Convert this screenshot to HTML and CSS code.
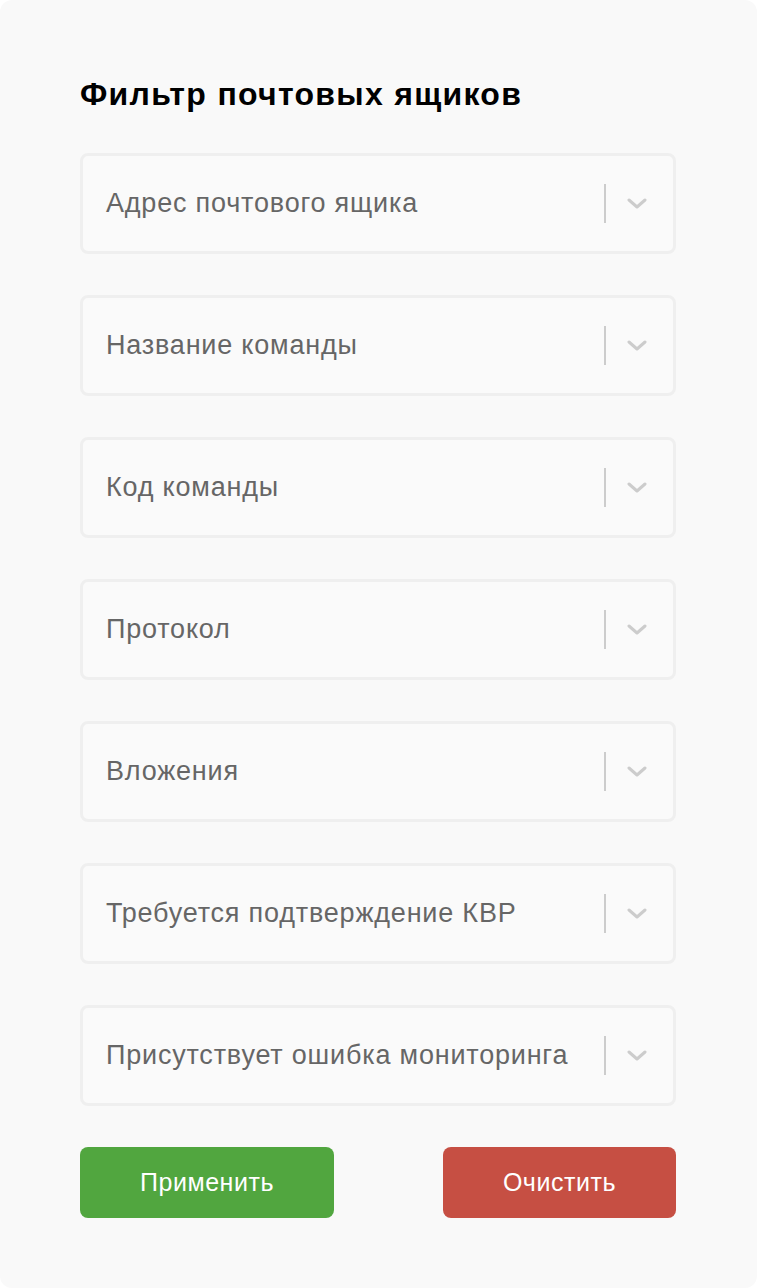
FILE: index.html
```html
<!DOCTYPE html>
<html lang="ru">
<head>
<meta charset="utf-8">
<title>Фильтр почтовых ящиков</title>
<link rel="stylesheet" href="styles.css">
</head>
<body>
<div class="panel">
  <h1 class="title">Фильтр почтовых ящиков</h1>
  <div class="fields">
    <div class="select"><span class="placeholder">Адрес почтового ящика</span><span class="indicators"><span class="sep"></span><svg class="chev" width="20" height="12" viewBox="0 0 20 12"><path d="M2 2 L10 9 L18 2" fill="none" stroke="#cccccc" stroke-width="3" stroke-linecap="round" stroke-linejoin="round"/></svg></span></div>
    <div class="select"><span class="placeholder">Название команды</span><span class="indicators"><span class="sep"></span><svg class="chev" width="20" height="12" viewBox="0 0 20 12"><path d="M2 2 L10 9 L18 2" fill="none" stroke="#cccccc" stroke-width="3" stroke-linecap="round" stroke-linejoin="round"/></svg></span></div>
    <div class="select"><span class="placeholder">Код команды</span><span class="indicators"><span class="sep"></span><svg class="chev" width="20" height="12" viewBox="0 0 20 12"><path d="M2 2 L10 9 L18 2" fill="none" stroke="#cccccc" stroke-width="3" stroke-linecap="round" stroke-linejoin="round"/></svg></span></div>
    <div class="select"><span class="placeholder">Протокол</span><span class="indicators"><span class="sep"></span><svg class="chev" width="20" height="12" viewBox="0 0 20 12"><path d="M2 2 L10 9 L18 2" fill="none" stroke="#cccccc" stroke-width="3" stroke-linecap="round" stroke-linejoin="round"/></svg></span></div>
    <div class="select"><span class="placeholder">Вложения</span><span class="indicators"><span class="sep"></span><svg class="chev" width="20" height="12" viewBox="0 0 20 12"><path d="M2 2 L10 9 L18 2" fill="none" stroke="#cccccc" stroke-width="3" stroke-linecap="round" stroke-linejoin="round"/></svg></span></div>
    <div class="select"><span class="placeholder">Требуется подтверждение КВР</span><span class="indicators"><span class="sep"></span><svg class="chev" width="20" height="12" viewBox="0 0 20 12"><path d="M2 2 L10 9 L18 2" fill="none" stroke="#cccccc" stroke-width="3" stroke-linecap="round" stroke-linejoin="round"/></svg></span></div>
    <div class="select"><span class="placeholder">Присутствует ошибка мониторинга</span><span class="indicators"><span class="sep"></span><svg class="chev" width="20" height="12" viewBox="0 0 20 12"><path d="M2 2 L10 9 L18 2" fill="none" stroke="#cccccc" stroke-width="3" stroke-linecap="round" stroke-linejoin="round"/></svg></span></div>
  </div>
  <div class="actions">
    <button class="btn btn-apply">Применить</button>
    <button class="btn btn-clear">Очистить</button>
  </div>
</div>
</body>
</html>
```

FILE: styles.css
```css
html, body {
  margin: 0;
  padding: 0;
  background: #ffffff;
}
body {
  font-family: "Liberation Sans", Arial, sans-serif;
}
.panel {
  box-sizing: border-box;
  width: 757px;
  min-height: 1288px;
  background: #f9f9f9;
  border-radius: 12px;
  padding: 74px 81px 0 80px;
}
.title {
  margin: 0 0 39px 0;
  font-size: 32px;
  line-height: 40px;
  font-weight: 700;
  letter-spacing: 1.3px;
  color: #000000;
}
.fields {
  display: flex;
  flex-direction: column;
  gap: 41px;
}
.select {
  box-sizing: border-box;
  height: 101px;
  border: 3px solid #efefef;
  border-radius: 8px;
  background: #fafafa;
  display: flex;
  align-items: center;
  justify-content: space-between;
  padding-left: 23px;
}
.placeholder {
  font-size: 27px;
  letter-spacing: 0.8px;
  color: #666666;
}
.indicators {
  display: flex;
  align-items: center;
  height: 100%;
}
.sep {
  width: 2px;
  height: 39px;
  background: #cccccc;
  margin-right: 21px;
}
.chev {
  display: block;
  margin-right: 26px;
}
.actions {
  display: flex;
  justify-content: space-between;
  margin-top: 41px;
}
.btn {
  height: 71px;
  border: none;
  border-radius: 8px;
  color: #ffffff;
  font-family: "Liberation Sans", Arial, sans-serif;
  font-size: 25px;
  letter-spacing: 0.55px;
  cursor: pointer;
}
.btn-apply {
  width: 254px;
  background: #51a63f;
}
.btn-clear {
  width: 233px;
  background: #c64f43;
}
```
